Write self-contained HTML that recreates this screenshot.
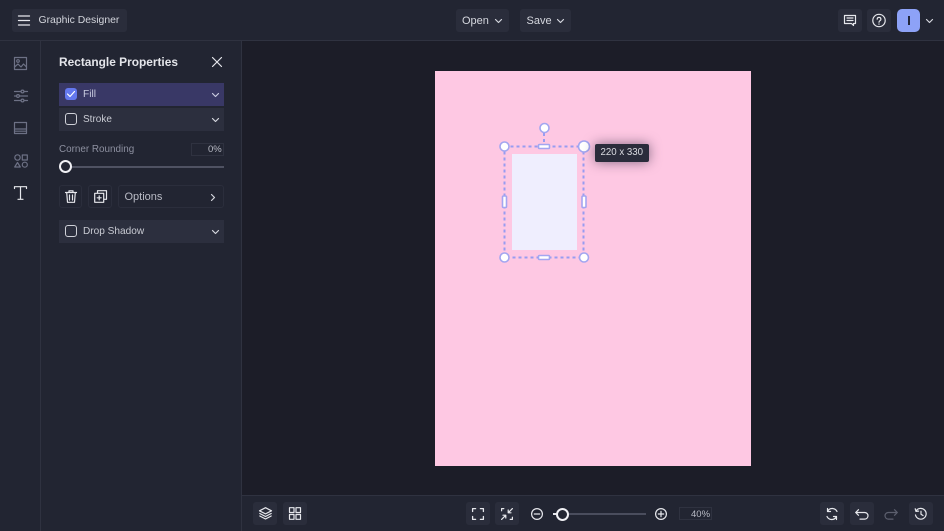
<!DOCTYPE html>
<html><head><meta charset="utf-8"><style>
*{box-sizing:border-box}
html,body{margin:0;padding:0}
body{width:944px;height:531px;overflow:hidden;background:#1c1d28;position:relative;font-family:"Liberation Sans",sans-serif;color:#d5d7de}
.a{position:absolute}
.btn{position:absolute;background:#2a2d3b;border-radius:3px}
.t{position:absolute;white-space:nowrap;line-height:14px}
svg{position:absolute;overflow:visible;fill:none;stroke-linecap:round;stroke-linejoin:round}
</style></head><body>
<div class="a" style="left:0;top:0;width:944px;height:41px;background:#222532;border-bottom:1px solid #2f3240"></div>
<div class="a" style="left:0;top:41px;width:41px;height:490px;background:#222532;border-right:1px solid #2f3240"></div>
<div class="a" style="left:41px;top:41px;width:201px;height:490px;background:#222532;border-right:1px solid #2f3240"></div>
<div class="a" style="left:242px;top:495px;width:702px;height:36px;background:#222532;border-top:1px solid #2f3240"></div>

<div class="btn" style="left:12px;top:9px;width:115px;height:23px"></div>
<svg style="left:18px;top:15px" width="12" height="11" stroke="#e6e7ec" stroke-width="1.3"><path d="M.5 1h11M.5 5.500h11M.5 10h11"/></svg>
<div class="t" style="left:38.500px;top:14px;font-size:10.400px;color:#d3d5dc">Graphic Designer</div>

<div class="btn" style="left:456px;top:9px;width:53px;height:23px"></div>
<div class="t" style="left:462px;top:14px;font-size:11px">Open</div>
<svg style="left:495px;top:18.500px" width="7" height="4" stroke="#d5d7de" stroke-width="1.200"><path d="M.5.500L3.500 3.500L6.500.5"/></svg>
<div class="btn" style="left:520px;top:9px;width:51px;height:23px"></div>
<div class="t" style="left:526.500px;top:14px;font-size:11px">Save</div>
<svg style="left:557px;top:18.500px" width="7" height="4" stroke="#d5d7de" stroke-width="1.200"><path d="M.5.500L3.500 3.500L6.500.5"/></svg>

<div class="btn" style="left:838px;top:9px;width:24px;height:23px"></div>
<svg style="left:844px;top:15px" width="12" height="11" stroke="#e6e7ec" stroke-width="1.200"><path d="M.5.500h11v8H9.500v2L7.500 8.500H.5zM3 3h6M3 5.500h6"/></svg>
<div class="btn" style="left:867px;top:9px;width:24px;height:23px"></div>
<svg style="left:872px;top:14px" width="14" height="14" stroke="#e6e7ec" stroke-width="1.200"><circle cx="7" cy="6.500" r="6.200"/><path d="M5.200 5.200c0-2.400 3.700-2.400 3.700 0c0 1.500-1.900 1.500-1.900 3M7 10v.2"/></svg>
<div class="a" style="left:897px;top:9px;width:23px;height:23px;border-radius:5px;background:#8da2f7"></div>
<div class="a" style="left:908px;top:16px;width:2px;height:9px;background:#22263a"></div>
<svg style="left:926px;top:18.500px" width="7" height="4" stroke="#d5d7de" stroke-width="1.200"><path d="M.5.500L3.500 3.500L6.500.5"/></svg>

<!-- side icons -->
<svg style="left:14px;top:57px" width="13" height="13" stroke="#6d7185" stroke-width="1.200"><rect x=".5" y=".5" width="12" height="12"/><circle cx="4" cy="4" r="1.300"/><path d="M.5 10L4 7l3 3 2.500-3 3 3"/></svg>
<svg style="left:14px;top:90px" width="13" height="12" stroke="#6d7185" stroke-width="1.200"><path d="M.5 1.500h13M.5 6h13M.5 10.500h13" /><circle cx="8.500" cy="1.500" r="1.400" fill="#222532"/><circle cx="4" cy="6" r="1.400" fill="#222532"/><circle cx="8.500" cy="10.500" r="1.400" fill="#222532"/></svg>
<svg style="left:14px;top:122px" width="13" height="12" stroke="#6d7185" stroke-width="1.200"><rect x=".5" y=".5" width="12" height="11"/><path d="M.5 7h12M.5 9.200h12"/></svg>
<svg style="left:14px;top:154px" width="14" height="14" stroke="#6d7185" stroke-width="1.200"><circle cx="3.500" cy="3.500" r="2.700"/><rect x="8.300" y="1" width="5" height="5"/><path d="M3.500 8.500L6.300 13H.7z"/><circle cx="10.800" cy="10.700" r="2.500"/></svg>
<svg style="left:14px;top:186px" width="13" height="14" stroke="#e6e7ec" stroke-width="1.200"><path d="M.5 2.500V.7h12v1.800M6.500.7v12.600M4 13.300h5"/></svg>

<!-- panel -->
<div class="t" style="left:59px;top:55px;font-size:11.900px;font-weight:bold;color:#e4e5ea">Rectangle Properties</div>
<svg style="left:212px;top:57px" width="10" height="10" stroke="#e6e7ec" stroke-width="1.200"><path d="M.5.500l9 9M9.500.500l-9 9"/></svg>

<div class="a" style="left:59px;top:83px;width:165px;height:23px;background:#393866"></div>
<div class="a" style="left:65px;top:88px;width:12px;height:12px;border-radius:3px;background:#6478ee"></div>
<svg style="left:67px;top:91px" width="8" height="6" stroke="#fff" stroke-width="1.200"><path d="M.5 3L3 5.500L7.500.5"/></svg>
<div class="t" style="left:83px;top:88px;font-size:10.200px;color:#c9cbe0">Fill</div>
<svg style="left:212px;top:92.500px" width="7" height="4" stroke="#c9cbe0" stroke-width="1.200"><path d="M.5.500L3.500 3.500L6.500.5"/></svg>

<div class="a" style="left:59px;top:108px;width:165px;height:23px;background:#2c2f3e"></div>
<div class="a" style="left:65px;top:113px;width:12px;height:12px;border-radius:3px;border:1px solid #cfd1d8"></div>
<div class="t" style="left:83px;top:113px;font-size:10px;color:#c9cbd3">Stroke</div>
<svg style="left:212px;top:117.500px" width="7" height="4" stroke="#d5d7de" stroke-width="1.200"><path d="M.5.500L3.500 3.500L6.500.5"/></svg>

<div class="t" style="left:59px;top:143px;font-size:9.900px;color:#8d90a0">Corner Rounding</div>
<div class="a" style="left:191px;top:143px;width:33px;height:13px;border:1px solid #2f3240"></div>
<div class="t" style="left:208px;top:143px;font-size:9.500px;color:#b9bbc5">0%</div>
<div class="a" style="left:66px;top:166px;width:158px;height:1.500px;background:#4f5262"></div>
<div class="a" style="left:59px;top:160px;width:13px;height:13px;border-radius:50%;background:#222532;border:2px solid #f0f0f4"></div>

<div class="a" style="left:59px;top:185px;width:23px;height:23px;border:1px solid #2b2e3c;border-radius:3px"></div>
<svg style="left:65px;top:190px" width="12" height="13" stroke="#e6e7ec" stroke-width="1.200"><path d="M.5 2.500h11M4 2.500V.8h4v1.700M1.700 2.500L2.500 12.300h7l.8-9.800M4.500 5v5M7.500 5v5"/></svg>
<div class="a" style="left:88px;top:185px;width:24px;height:23px;border:1px solid #2b2e3c;border-radius:3px"></div>
<svg style="left:94px;top:190px" width="13" height="13" stroke="#e6e7ec" stroke-width="1.200"><path d="M3.500 3V.7h9v8.600H10"/><rect x=".7" y="3.300" width="9" height="9"/><path d="M5.200 5.800v4M3.200 7.800h4"/></svg>
<div class="a" style="left:118px;top:185px;width:106px;height:23px;border:1px solid #2b2e3c;border-radius:3px"></div>
<div class="t" style="left:124.500px;top:190px;font-size:11px;color:#b9bbc5">Options</div>
<svg style="left:211px;top:193.500px" width="4" height="7" stroke="#d5d7de" stroke-width="1.200"><path d="M.5.500L3.500 3.500L.5 6.500"/></svg>

<div class="a" style="left:59px;top:220px;width:165px;height:23px;background:#2c2f3e"></div>
<div class="a" style="left:65px;top:225px;width:12px;height:12px;border-radius:3px;border:1px solid #cfd1d8"></div>
<div class="t" style="left:83px;top:225px;font-size:10.100px;color:#c9cbd3">Drop Shadow</div>
<svg style="left:212px;top:229.500px" width="7" height="4" stroke="#d5d7de" stroke-width="1.200"><path d="M.5.500L3.500 3.500L6.500.5"/></svg>

<!-- canvas -->
<div class="a" style="left:435px;top:71px;width:316px;height:395px;background:#fec8e3"></div>
<div class="a" style="left:512px;top:154px;width:65px;height:96px;background:#efeefe"></div>
<svg style="left:0;top:0" width="944" height="531">
<g stroke="#989cf0" stroke-width="2" stroke-dasharray="3 3" stroke-linecap="butt">
<rect x="504.500" y="146.500" width="79" height="111"/>
<path d="M544 133v13"/></g>
<g stroke="#a3a6f0" stroke-width="1.600" fill="#fff">
<circle cx="544.500" cy="128" r="4.500"/>
<circle cx="504.500" cy="146.500" r="4.500"/>
<circle cx="584" cy="146.500" r="5.500"/>
<circle cx="504.500" cy="257.500" r="4.500"/>
<circle cx="584" cy="257.500" r="4.500"/>
<rect x="538.500" y="144.500" width="11" height="4" rx="1"/>
<rect x="538.500" y="255.500" width="11" height="4" rx="1"/>
<rect x="502.500" y="196" width="4" height="11.500" rx="1"/>
<rect x="582" y="196" width="4" height="11.500" rx="1"/>
</g></svg>
<div class="a" style="left:595px;top:144px;width:54px;height:17.500px;background:#2a2c3b;border-radius:2px;box-shadow:0 0 12px rgba(30,25,50,.55)"></div>
<div class="t" style="left:600.500px;top:146px;font-size:9.700px;color:#d9dae0">220 x 330</div>

<!-- bottom -->
<div class="btn" style="left:253px;top:502px;width:24px;height:23px"></div>
<svg style="left:259px;top:507px" width="13" height="13" stroke="#e6e7ec" stroke-width="1.200"><path d="M6.500.7L12.500 3.800L6.500 6.900L.5 3.800zM.8 6.500l5.700 3 5.700-3M.8 9l5.700 3 5.700-3"/></svg>
<div class="btn" style="left:283px;top:502px;width:24px;height:23px"></div>
<svg style="left:289px;top:507px" width="12" height="13" stroke="#e6e7ec" stroke-width="1.200"><rect x=".5" y=".7" width="4.500" height="4.800"/><rect x="7" y=".7" width="4.500" height="4.800"/><rect x=".5" y="7.500" width="4.500" height="4.800"/><rect x="7" y="7.500" width="4.500" height="4.800"/></svg>

<div class="btn" style="left:466px;top:502px;width:24px;height:23px"></div>
<svg style="left:472px;top:508px" width="12" height="12" stroke="#e6e7ec" stroke-width="1.300"><path d="M.6 3.500V.6h3M8.400.6h3v2.900M11.400 8.500v2.900h-3M3.600 11.400h-3V8.500"/></svg>
<div class="btn" style="left:495px;top:502px;width:24px;height:23px"></div>
<svg style="left:501px;top:508px" width="12" height="12" stroke="#e6e7ec" stroke-width="1.200"><path d="M.6 2.800V.6h2.200M11.400 9.200v2.200H9.200M11.400.6L7.200 4.800M7.200 2v2.800H10M.6 11.400L4.800 7.200M2 7.200h2.800V10"/></svg>
<svg style="left:531px;top:508px" width="12" height="12" stroke="#e6e7ec" stroke-width="1.200"><circle cx="6" cy="6" r="5.400"/><path d="M3.300 6h5.400"/></svg>
<div class="a" style="left:553px;top:513px;width:8px;height:1.500px;background:#e6e7ec"></div>
<div class="a" style="left:566px;top:513px;width:80px;height:1.500px;background:#4a4d5d"></div>
<div class="a" style="left:556px;top:507.500px;width:13px;height:13px;border-radius:50%;background:#222532;border:2px solid #f0f0f4"></div>
<svg style="left:655px;top:508px" width="12" height="12" stroke="#e6e7ec" stroke-width="1.200"><circle cx="6" cy="6" r="5.400"/><path d="M3.300 6h5.400M6 3.300v5.400"/></svg>
<div class="a" style="left:679px;top:507px;width:33px;height:13px;border:1px solid #2f3240"></div>
<div class="t" style="left:691px;top:507.500px;font-size:9.500px;color:#b9bbc5">40%</div>

<div class="btn" style="left:820px;top:502px;width:24px;height:23px"></div>
<svg style="left:826px;top:508px" width="12" height="12" stroke="#e6e7ec" stroke-width="1.200"><path d="M11 3.500A5.300 5.300 0 0 0 1.700 3M1 8.500A5.300 5.300 0 0 0 10.300 9M1.500.5v3h3M10.500 11.500v-3h-3"/></svg>
<div class="btn" style="left:850px;top:502px;width:24px;height:23px"></div>
<svg style="left:855px;top:509px" width="14" height="11" stroke="#e6e7ec" stroke-width="1.200"><path d="M3.500.7L.7 3.500l2.800 2.800M.7 3.500h9a3.300 3.300 0 0 1 0 6.600H5"/></svg>
<svg style="left:884px;top:509px" width="14" height="11" stroke="#5c5f6e" stroke-width="1.200"><path d="M10.500.7l2.800 2.800l-2.800 2.800M13.300 3.500h-9a3.300 3.300 0 0 0 0 6.600H9"/></svg>
<div class="btn" style="left:909px;top:502px;width:24px;height:23px"></div>
<svg style="left:914px;top:508px" width="13" height="12" stroke="#e6e7ec" stroke-width="1.200"><path d="M2 3.200A5.400 5.400 0 1 1 1.500 7M1.200 .8L2 3.400l2.600-.3M7 3.200v3l2 1.300"/></svg>
</body></html>
